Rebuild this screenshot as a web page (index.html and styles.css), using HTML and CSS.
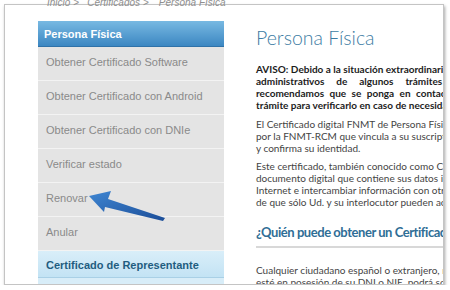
FILE: index.html
```
<!DOCTYPE html>
<html lang="es">
<head>
<meta charset="utf-8">
<link rel="stylesheet" href="styles.css">
</head>
<body>
<div class="card">
  <div class="crumbs"><span>Inicio</span><span class="sep">&gt;</span><span>Certificados</span><span class="sep sep2">&gt;</span><span>Persona Física</span></div>
  <div class="page">
    <nav class="sidebar">
      <div class="side-head">Persona Física</div>
      <div class="side-item">Obtener Certificado Software</div>
      <div class="side-item">Obtener Certificado con Android</div>
      <div class="side-item">Obtener Certificado con DNIe</div>
      <div class="side-item">Verificar estado</div>
      <div class="side-item">Renovar</div>
      <div class="side-item">Anular</div>
      <div class="side-sub">Certificado de Representante</div>
      <div class="side-sub2"></div>
    </nav>
    <main class="main">
      <h1 class="title">Persona Física</h1>
      <p class="aviso">AVISO: Debido a la situación extraordinaria generada por el COVID-19<br><span class="spread">administrativos de algunos trámites pueden</span><br><span class="spread3">recomendamos que se ponga en contacto con su oficina</span><br>trámite para verificarlo en caso de necesidad.</p>
      <p class="txt">El Certificado digital FNMT de Persona Física es la certificación electrónica expedida<br>por la FNMT-RCM que vincula a su suscriptor unos Datos de verificación de Firma<br>y confirma su identidad.</p>
      <p class="txt txt3">Este certificado, también conocido como Certificado de Ciudadano o de Usuario, es un<br>documento digital que contiene sus datos identificativos. Le permitirá identificarse en<br>Internet e intercambiar información con otras personas y organismos con la garantía<br>de que sólo Ud. y su interlocutor pueden acceder a ella.</p>
      <h2 class="sub">¿Quién puede obtener un Certificado?</h2>
      <p class="txt txt4">Cualquier ciudadano español o extranjero, mayor de edad o menor emancipado que<br>esté en posesión de su DNI o NIE, podrá solicitar y obtener su certificado de forma<br>gratuita para firmar y acreditar su identidad.</p>
    </main>
  </div>
  <svg class="arrow" width="90" height="40" viewBox="80 185 90 40" aria-hidden="true">
    <defs>
      <linearGradient id="ag" x1="0" y1="0" x2="1" y2="1">
        <stop offset="0" stop-color="#3f86d2"/>
        <stop offset="1" stop-color="#1b4d98"/>
      </linearGradient>
    </defs>
    <polygon points="89,196 111,191 108,199 165,218 163,221 105,207 104,212" fill="url(#ag)"/>
  </svg>
</div>
</body>
</html>
```
FILE: styles.css
```
html, body {
  margin: 0;
  padding: 0;
  background: #fff;
}
body {
  padding: 4px 0 0 4px;
}
.card {
  position: relative;
  box-sizing: border-box;
  width: 440px;
  height: 281px;
  border: 1px solid #c4c4c4;
  box-shadow: 1px 2px 3px rgba(0, 0, 0, 0.35);
  background: #fff;
  display: flex;
  flex-direction: column;
}
.crumbs {
  margin-top: -8px;
  height: 24px;
  padding-left: 42px;
  font: italic 10px/12px "Liberation Sans", Arial, sans-serif;
  color: #8f8f8f;
  display: flex;
}
.crumbs .sep {
  margin: 0 8px 0 3px;
  font-style: normal;
}
.crumbs .sep2 {
  margin-right: 10px;
}
.page {
  flex: 1;
  display: flex;
  overflow: hidden;
}
.sidebar {
  flex: none;
  width: 186px;
  margin-left: 33px;
  background: #e4e4e4;
  font: 11px/14px "Liberation Sans", Arial, sans-serif;
}
.side-head {
  height: 26px;
  box-sizing: border-box;
  padding: 6px 6px 0;
  color: #fff;
  font-weight: bold;
  background: linear-gradient(#78b9e2, #3c87c2);
  border-bottom: 1px solid #2f72a8;
}
.side-item {
  height: 34px;
  box-sizing: border-box;
  padding: 8px 8px 0;
  color: #8a8a8a;
  border-top: 1px solid #f3f3f3;
}
.side-head + .side-item {
  border-top: none;
  height: 33px;
}
.side-sub {
  height: 28px;
  box-sizing: border-box;
  padding: 7px 8px 0;
  color: #1f5d80;
  font-weight: bold;
  background: linear-gradient(#d9eef9, #c3e3f4);
  border-top: 1px solid #f3f3f3;
  border-bottom: 1px solid #a9d0e6;
}
.side-sub2 {
  height: 28px;
  background: #d8edf8;
}
.main {
  flex: none;
  width: 400px;
  padding-left: 32px;
  font: 10px/12px Lato, "Open Sans", sans-serif;
  color: #444;
  white-space: nowrap;
}
.title {
  margin: 5px 0 0;
  font: 300 19.5px/24px Lato, sans-serif;
  color: #3d7ca3;
}
.aviso {
  margin: 13px 0 0;
  font-weight: bold;
  color: #1c1c1c;
}
.spread {
  word-spacing: 9.5px;
}
.spread3 {
  word-spacing: 3px;
}
.txt {
  margin: 7px 0 0;
}
.txt3 {
  margin-top: 6px;
}
.sub {
  margin: 16px 0 0;
  padding-bottom: 6px;
  border-bottom: 2px solid #d8d8d8;
  font: bold 13px/16px Lato, sans-serif;
  letter-spacing: -0.45px;
  color: #2f6e96;
}
.txt4 {
  margin-top: 16px;
}
.arrow {
  position: absolute;
  left: 75px;
  top: 180px;
}
```
